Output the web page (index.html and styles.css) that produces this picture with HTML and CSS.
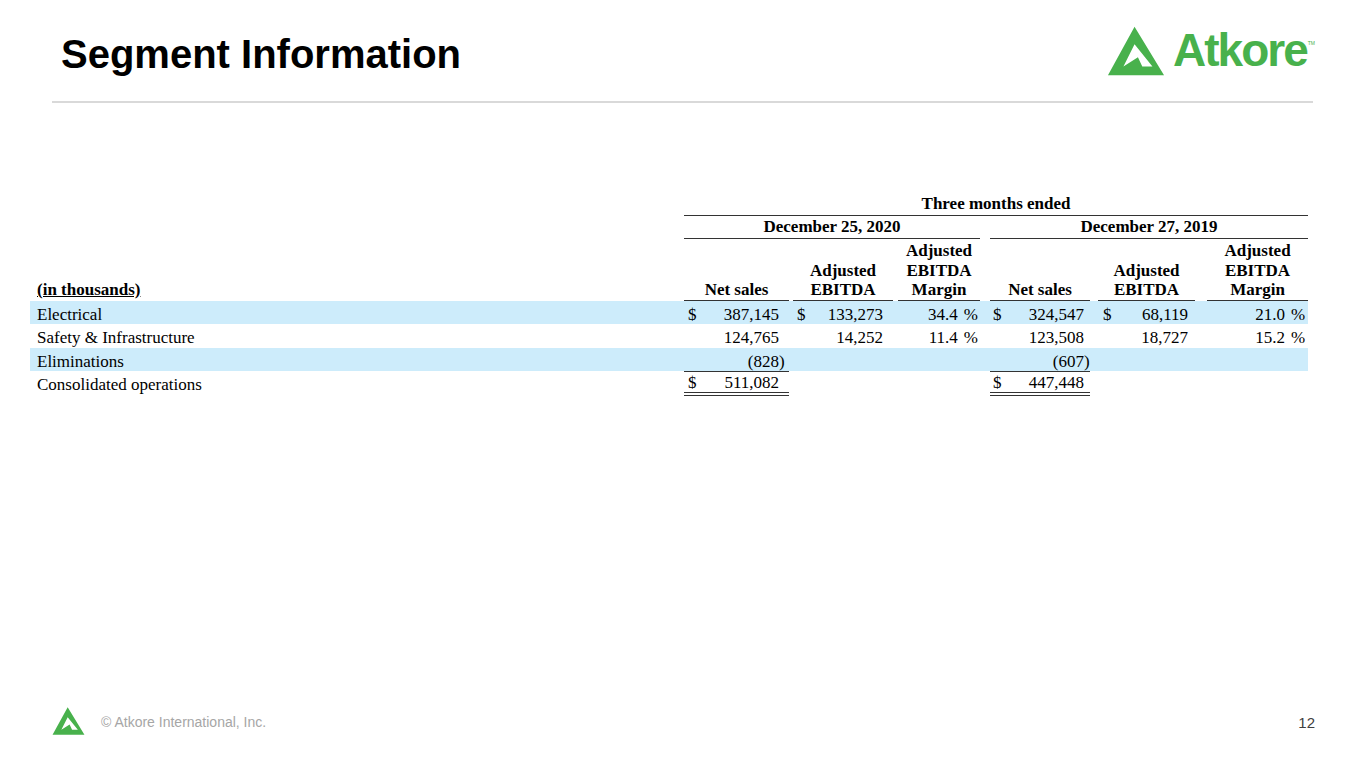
FILE: index.html
```html
<!DOCTYPE html>
<html lang="en">
<head>
<meta charset="utf-8">
<title>Segment Information</title>
<link rel="stylesheet" href="styles.css">
</head>
<body>
<div class="slide">
  <header class="top">
    <h1 class="title">Segment Information</h1>
    <div class="logo">
      <svg class="logo-mark" viewBox="0 0 60 50" aria-hidden="true"><path fill-rule="evenodd" d="M1 50 L28.5 0 L59 50 Z M28.5 18 L17 41 L32 31.5 L36.5 41 L47 41 Z"/></svg>
      <span class="logo-word">Atkore</span>
      <span class="tm">TM</span>
    </div>
  </header>
  <div class="rule"></div>
  <main class="content">
    <table class="seg">
      <colgroup>
        <col class="w-lbl"><col class="w1"><col class="w2"><col class="w3"><col class="w4"><col class="w5"><col class="w6">
      </colgroup>
      <tr class="hd-top">
        <td></td>
        <td colspan="6"><div class="hd">Three months ended</div></td>
      </tr>
      <tr class="hd-date">
        <td></td>
        <td colspan="3"><div class="hd">December 25, 2020</div></td>
        <td colspan="3"><div class="hd g4">December 27, 2019</div></td>
      </tr>
      <tr class="hd-col">
        <td><div class="lbl-hd">(in thousands)</div></td>
        <td><div class="hd">Net sales</div></td>
        <td><div class="hd g2">Adjusted<br>EBITDA</div></td>
        <td><div class="hd g3">Adjusted<br>EBITDA<br>Margin</div></td>
        <td><div class="hd g4">Net sales</div></td>
        <td><div class="hd g5">Adjusted<br>EBITDA</div></td>
        <td><div class="hd g6">Adjusted<br>EBITDA<br>Margin</div></td>
      </tr>
      <tr class="data blue">
        <td><div class="cell lbl">Electrical</div></td>
        <td><div class="cell box c1"><span>$</span><span>387,145<span class="rp"></span></span></div></td>
        <td><div class="cell box c2"><span>$</span><span>133,273<span class="rp"></span></span></div></td>
        <td><div class="cell box pct c3"><span>34.4<span class="pc">%</span></span></div></td>
        <td><div class="cell box c4"><span>$</span><span>324,547<span class="rp"></span></span></div></td>
        <td><div class="cell box c5"><span>$</span><span>68,119<span class="rp"></span></span></div></td>
        <td><div class="cell box pct c6"><span>21.0<span class="pc">%</span></span></div></td>
      </tr>
      <tr class="data">
        <td><div class="cell lbl">Safety &amp; Infrastructure</div></td>
        <td><div class="cell box c1 right"><span>124,765<span class="rp"></span></span></div></td>
        <td><div class="cell box c2 right"><span>14,252<span class="rp"></span></span></div></td>
        <td><div class="cell box pct c3"><span>11.4<span class="pc">%</span></span></div></td>
        <td><div class="cell box c4 right"><span>123,508<span class="rp"></span></span></div></td>
        <td><div class="cell box c5 right"><span>18,727<span class="rp"></span></span></div></td>
        <td><div class="cell box pct c6"><span>15.2<span class="pc">%</span></span></div></td>
      </tr>
      <tr class="data blue">
        <td><div class="cell lbl">Eliminations</div></td>
        <td><div class="cell box c1 right"><span>(828<span class="rp">)</span></span></div></td>
        <td></td>
        <td></td>
        <td><div class="cell box c4 right"><span>(607<span class="rp">)</span></span></div></td>
        <td></td>
        <td></td>
      </tr>
      <tr class="data">
        <td><div class="cell lbl">Consolidated operations</div></td>
        <td><div class="tot box c1"><span>$</span><span>511,082<span class="rp"></span></span></div></td>
        <td></td>
        <td></td>
        <td><div class="tot box c4"><span>$</span><span>447,448<span class="rp"></span></span></div></td>
        <td></td>
        <td></td>
      </tr>
    </table>
  </main>
  <footer class="foot">
    <svg class="foot-mark" viewBox="0 0 60 50" aria-hidden="true"><path fill-rule="evenodd" d="M1 50 L28.5 0 L59 50 Z M28.5 18 L17 41 L32 31.5 L36.5 41 L47 41 Z"/></svg>
    <span class="copy">© Atkore International, Inc.</span>
    <span class="page">12</span>
  </footer>
</div>
</body>
</html>
```

FILE: styles.css
```css
body {
  margin: 0;
  background: #ffffff;
}

.slide {
  width: 1365px;
  height: 768px;
  display: flex;
  flex-direction: column;
  font-family: "Liberation Sans", Arial, sans-serif;
  background: #ffffff;
  overflow: hidden;
}

/* ---------- header ---------- */
.top {
  display: flex;
  justify-content: space-between;
  align-items: flex-start;
  height: 50px;
  padding: 26px 50px 0 61px;
}

.title {
  margin: 5px 0 0;
  font-size: 40px;
  line-height: 46px;
  font-weight: 700;
  color: #000000;
}

.logo {
  display: flex;
  align-items: flex-start;
  color: #48b14c;
}

.logo-mark {
  width: 58px;
  height: 50px;
  fill: #48b14c;
  margin-right: 8px;
}

.logo-word {
  font-size: 46px;
  line-height: 46px;
  font-weight: 700;
  letter-spacing: -2px;
  margin-top: 1px;
}

.tm {
  font-size: 5px;
  line-height: 6px;
  margin-top: 14px;
  margin-left: 1px;
}

.rule {
  height: 2px;
  background: #d9d9d9;
  margin: 25px 52px 0 52px;
}

/* ---------- table ---------- */
.content {
  padding: 91px 57px 0 30px;
}

.seg {
  border-collapse: collapse;
  table-layout: fixed;
  width: 1278px;
  font-family: "Liberation Serif", "Times New Roman", serif;
  font-size: 17px;
  color: #000000;
}

.w-lbl { width: 654px; }
.w1 { width: 105px; }
.w2 { width: 104px; }
.w3 { width: 87px; }
.w4 { width: 110px; }
.w5 { width: 105px; }
.w6 { width: 113px; }

.seg td {
  padding: 0;
  vertical-align: bottom;
}

.hd {
  font-weight: 700;
  text-align: center;
  border-bottom: 1px solid #333333;
}

.hd-top .hd {
  line-height: 20px;
  padding-bottom: 1px;
}

.hd-date .hd {
  line-height: 20px;
  padding: 1px 0;
}

.hd-col .hd {
  line-height: 19.5px;
  padding-top: 2px;
}

.lbl-hd {
  font-weight: 700;
  text-decoration: underline;
  padding-left: 7px;
  line-height: 19.5px;
  padding-bottom: 1px;
}

.g2 { margin-left: 4px; }
.g3 { margin-left: 5px; }
.g4 { margin-left: 10px; }
.g5 { margin-left: 8px; }
.g6 { margin-left: 12px; }

.data td {
  height: 23.5px;
  vertical-align: top;
}

.blue {
  background: #cdecfb;
}

.cell {
  line-height: 19.5px;
  padding-top: 4px;
}

.lbl {
  padding-left: 7px;
  white-space: nowrap;
}

.box {
  display: flex;
  justify-content: space-between;
  white-space: nowrap;
}

.box.right,
.box.pct {
  justify-content: flex-end;
}

.rp {
  display: inline-block;
  width: 6px;
}

.pc {
  margin-left: 6px;
}

.c1 { padding-left: 4px; padding-right: 4px; }
.c2 { margin-left: 4px; padding-left: 4px; padding-right: 4px; }
.c3 { margin-left: 5px; padding-right: 2px; }
.c4 { margin-left: 10px; padding-left: 3px; padding-right: 0; }
.c5 { margin-left: 8px; padding-left: 5px; padding-right: 1px; }
.c6 { margin-left: 12px; padding-right: 3px; }

.tot {
  border-top: 1px solid #333333;
  border-bottom: 4px double #333333;
  padding-top: 2px;
  line-height: 18px;
}

/* ---------- footer ---------- */
.foot {
  margin-top: auto;
  display: flex;
  align-items: center;
  height: 28px;
  padding: 0 50px 33px 52px;
}

.foot-mark {
  width: 33px;
  height: 28px;
  fill: #48b14c;
}

.copy {
  margin-left: 16px;
  margin-top: 2px;
  font-size: 14px;
  color: #a6a6a6;
}

.page {
  margin-left: auto;
  margin-top: 3px;
  font-size: 15px;
  color: #404040;
}
```
